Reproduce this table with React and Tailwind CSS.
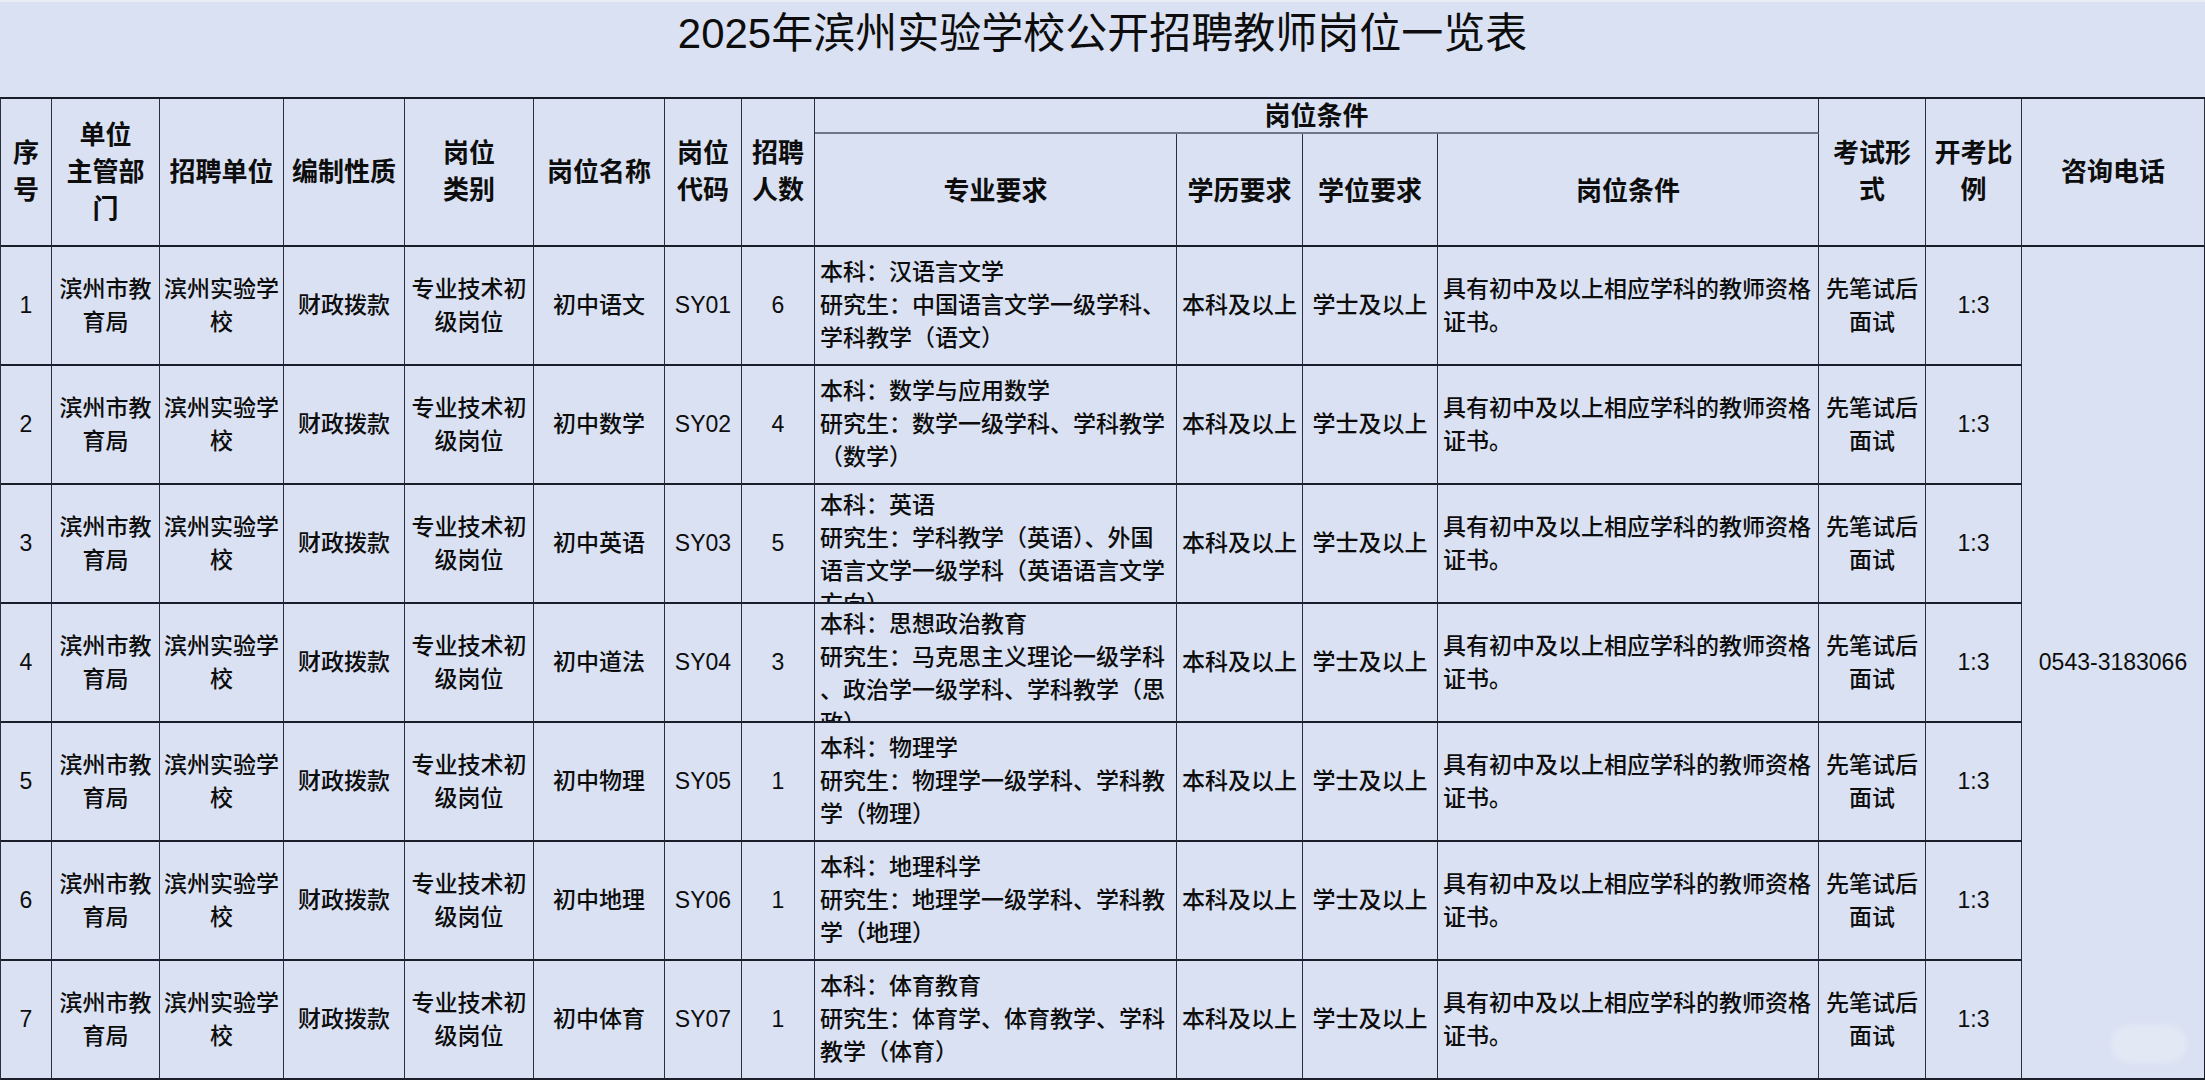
import React from "react";

const rows = [
  {
    n: "1", name: "初中语文", code: "SY01", num: "6",
    major: ["本科：汉语言文学", "研究生：中国语言文学一级学科、", "学科教学（语文）"],
  },
  {
    n: "2", name: "初中数学", code: "SY02", num: "4",
    major: ["本科：数学与应用数学", "研究生：数学一级学科、学科教学", "（数学）"],
  },
  {
    n: "3", name: "初中英语", code: "SY03", num: "5", overflow: true,
    major: ["本科：英语", "研究生：学科教学（英语）、外国", "语言文学一级学科（英语语言文学", "方向）"],
  },
  {
    n: "4", name: "初中道法", code: "SY04", num: "3", overflow: true,
    major: ["本科：思想政治教育", "研究生：马克思主义理论一级学科", "、政治学一级学科、学科教学（思", "政）"],
  },
  {
    n: "5", name: "初中物理", code: "SY05", num: "1",
    major: ["本科：物理学", "研究生：物理学一级学科、学科教", "学（物理）"],
  },
  {
    n: "6", name: "初中地理", code: "SY06", num: "1",
    major: ["本科：地理科学", "研究生：地理学一级学科、学科教", "学（地理）"],
  },
  {
    n: "7", name: "初中体育", code: "SY07", num: "1",
    major: ["本科：体育教育", "研究生：体育学、体育教学、学科", "教学（体育）"],
  },
];

function Lines({ lines }) {
  return lines.map((l, i) => (
    <div key={i} className="whitespace-nowrap">
      {l}
    </div>
  ));
}

function H({ lines, className = "" }) {
  return (
    <div
      className={
        "row-span-2 flex flex-col items-center justify-center text-center border-r border-b-2 border-r-[#2a2f3e] border-b-[#1a1e2b] text-[26px] leading-[37px] font-bold " +
        className
      }
    >
      <Lines lines={lines} />
    </div>
  );
}

function Sub({ lines, className = "" }) {
  return (
    <div
      className={
        "flex flex-col items-center justify-center text-center border-r border-b-2 border-r-[#2a2f3e] border-b-[#1a1e2b] text-[26px] leading-[37px] font-bold pt-[4px] " +
        className
      }
    >
      <Lines lines={lines} />
    </div>
  );
}

function C({ lines, left = false, top = false }) {
  const align = left ? "items-start text-left pl-[5px]" : "items-center text-center";
  const just = top ? "justify-start pt-[4px]" : "justify-center";
  return (
    <div
      className={
        "flex flex-col overflow-hidden border-r border-b-2 border-r-[#2a2f3e] border-b-[#1a1e2b] text-[23px] leading-[33px] font-medium " +
        align +
        " " +
        just
      }
    >
      <Lines lines={lines} />
    </div>
  );
}

export default function App() {
  return (
    <div className="w-[2205px] h-[1080px] overflow-hidden bg-[#dae1f2] text-[#0d0d0d] font-['Liberation_Sans','Noto_Sans_CJK_SC',sans-serif]">
      <div className="h-[97px] border-t-2 border-t-[#e8ecf4] pt-[11px] text-center text-[42px] leading-[42px] font-normal">
        2025年滨州实验学校公开招聘教师岗位一览表
      </div>
      <div className="grid grid-cols-[51px_108px_124px_121px_129px_131px_77px_73px_362px_126px_135px_381px_107px_96px_183px] grid-rows-[35px_113px_repeat(7,119px)] border-t-2 border-l border-t-[#1a1e2b] border-l-[#2a2f3e]">
        <H lines={["序", "号"]} />
        <H lines={["单位", "主管部", "门"]} />
        <H lines={["招聘单位"]} />
        <H lines={["编制性质"]} />
        <H lines={["岗位", "类别"]} />
        <H lines={["岗位名称"]} />
        <H lines={["岗位", "代码"]} />
        <H lines={["招聘", "人数"]} />
        <div className="col-span-4 flex items-center justify-center border-r border-b-2 border-r-[#2a2f3e] border-b-[#6f7687] text-[26px] leading-[37px] font-bold pt-[2px]">
          岗位条件
        </div>
        <H lines={["考试形", "式"]} />
        <H lines={["开考比", "例"]} />
        <H lines={["咨询电话"]} />
        <Sub lines={["专业要求"]} />
        <Sub lines={["学历要求"]} />
        <Sub lines={["学位要求"]} />
        <Sub lines={["岗位条件"]} />

        {rows.map((r, i) => (
          <React.Fragment key={r.n}>
            <C lines={[r.n]} />
            <C lines={["滨州市教", "育局"]} />
            <C lines={["滨州实验学", "校"]} />
            <C lines={["财政拨款"]} />
            <C lines={["专业技术初", "级岗位"]} />
            <C lines={[r.name]} />
            <C lines={[r.code]} />
            <C lines={[r.num]} />
            <C lines={r.major} left top={r.overflow} />
            <C lines={["本科及以上"]} />
            <C lines={["学士及以上"]} />
            <C lines={["具有初中及以上相应学科的教师资格", "证书。"]} left />
            <C lines={["先笔试后", "面试"]} />
            <C lines={["1:3"]} />
            {i === 0 && (
              <div className="row-span-7 relative flex items-center justify-center border-r border-b-2 border-r-[#1a1e2b] border-b-[#1a1e2b] text-[23px] leading-[33px] font-medium">
                0543-3183066
                <div className="absolute right-[17px] bottom-[15px] w-[76px] h-[38px] rounded-full bg-white/25 blur-[3px]" />
              </div>
            )}
          </React.Fragment>
        ))}
      </div>
    </div>
  );
}
